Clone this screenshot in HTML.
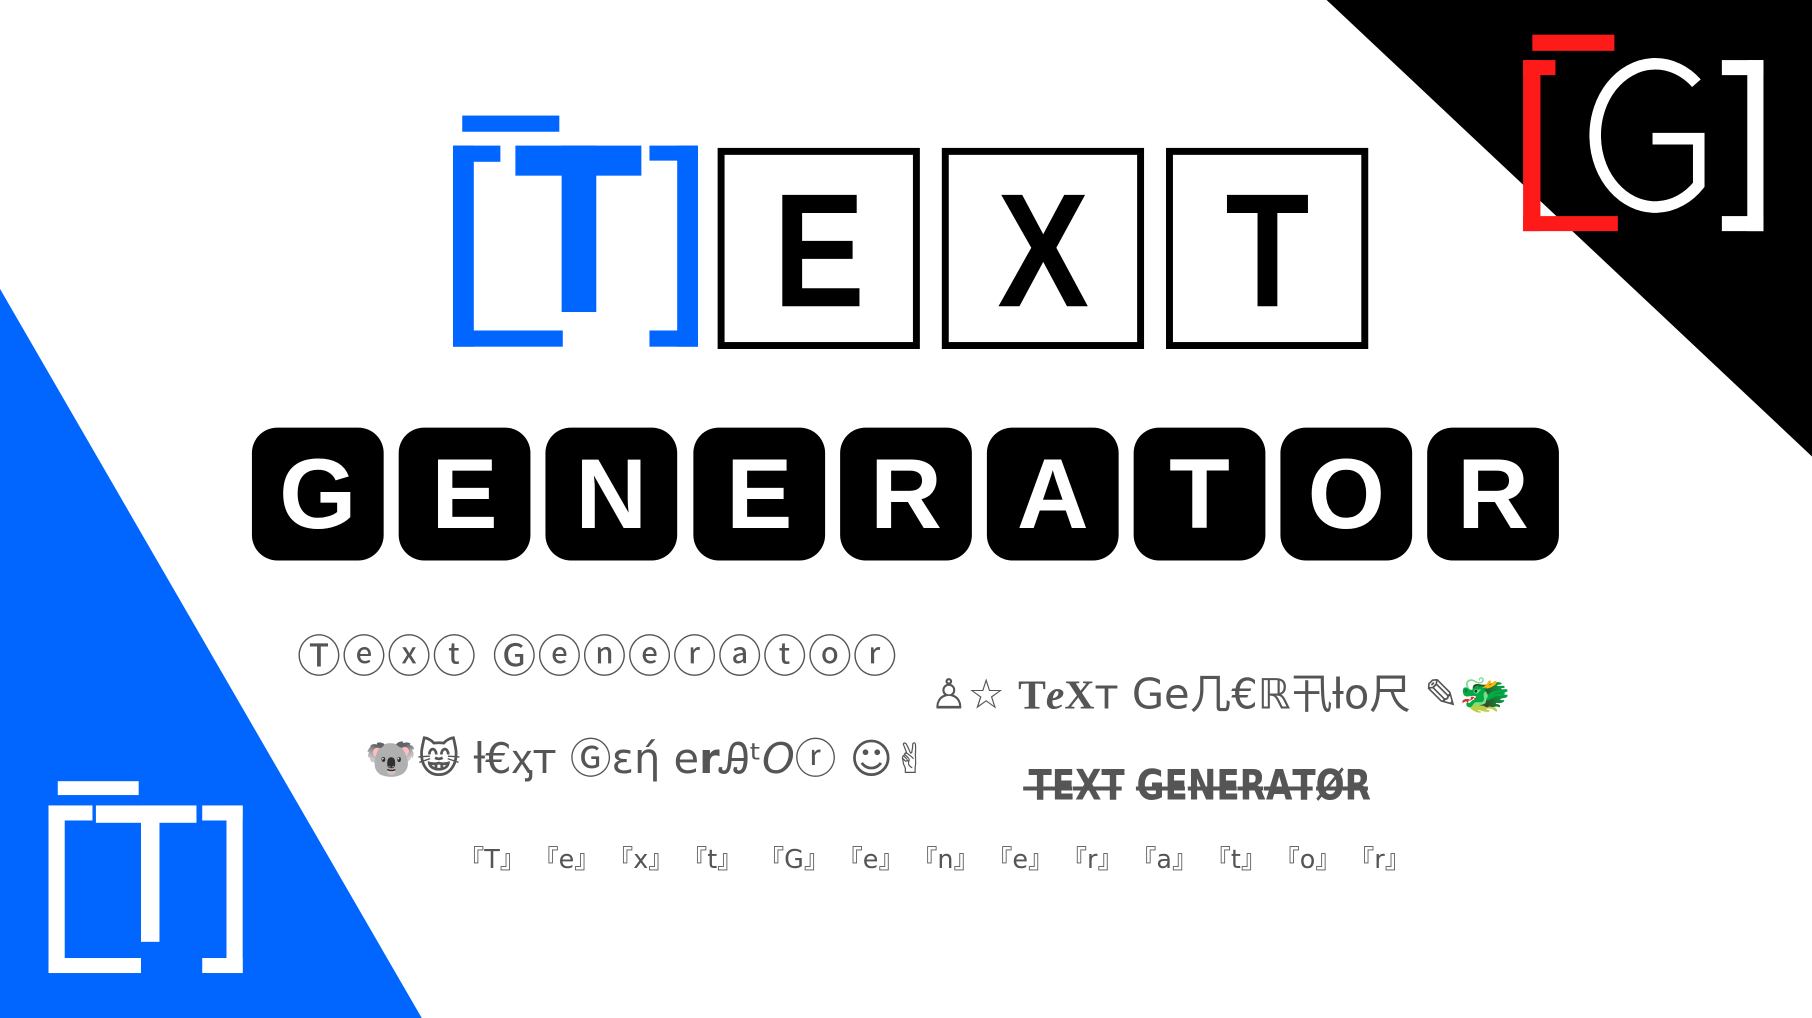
<!DOCTYPE html>
<html><head><meta charset="utf-8"><style>
html,body{margin:0;padding:0;width:1812px;height:1018px;overflow:hidden;background:#fff}
#s{position:absolute;left:0;top:0;width:1568px;height:881px;transform:scale(1.15561);transform-origin:0 0;font-family:"Liberation Sans","DejaVu Sans",sans-serif}
.a{position:absolute}
.box{position:absolute;top:128px;width:163px;height:162px;border:6px solid #000;display:flex;align-items:center;justify-content:center}
.box span{font-family:"Liberation Sans Narrow","Liberation Sans",sans-serif;font-weight:bold;font-size:140px;line-height:1;color:#000;transform:scaleX(.85);margin-top:4px}
.tile{position:absolute;top:370px;width:114px;height:115px;background:#000;border-radius:22px;color:#fff;font-weight:bold;font-size:86px;display:flex;align-items:center;justify-content:center;line-height:1}
.t{position:absolute;color:#555;white-space:nowrap;font-family:"DejaVu Sans","Liberation Sans","Noto Sans CJK JP",sans-serif}
</style></head><body><div id="s">
<svg class="a" style="left:0;top:0" width="1568" height="881">
<polygon points="1148,0 1568,0 1568,395" fill="#000"/>
<polygon points="0,250 365,881 0,881" fill="#0066ff"/>
<g fill="#0066ff">
<rect x="400" y="100" width="84" height="14"/>
<rect x="392" y="126" width="18" height="174"/><rect x="392" y="126" width="41" height="14"/><rect x="392" y="286" width="95" height="14"/>
<rect x="446" y="126" width="109" height="26"/><rect x="486" y="126" width="30" height="144"/>
<rect x="586" y="126" width="18" height="174"/><rect x="562" y="126" width="42" height="13"/><rect x="562" y="286" width="42" height="14"/>
</g>
<g fill="#fff">
<rect x="50" y="676" width="70" height="12"/>
<rect x="42" y="697" width="14" height="145"/><rect x="42" y="697" width="38" height="13"/><rect x="42" y="829" width="80" height="13"/>
<rect x="83" y="697" width="87" height="15"/><rect x="122" y="697" width="16" height="118"/>
<rect x="196" y="697" width="14" height="145"/><rect x="175" y="697" width="35" height="13"/><rect x="175" y="829" width="35" height="13"/>
</g>
<g fill="#ff1a1a">
<rect x="1326" y="30" width="71" height="14"/>
<rect x="1318" y="52" width="15" height="148"/><rect x="1318" y="52" width="28" height="13"/><rect x="1318" y="187" width="82" height="13"/>
</g>
<g fill="#fff">
<rect x="1512" y="52" width="14" height="148"/><rect x="1490" y="52" width="36" height="13"/><rect x="1490" y="187" width="36" height="13"/>
</g>
<path d="M1468,72 A52,62 0 1 0 1470,160 L1470,120 L1430,120" fill="none" stroke="#fff" stroke-width="10"/>
</svg>
<div class="box" style="left:621px"><span>E</span></div>
<div class="box" style="left:815px"><span>X</span></div>
<div class="box" style="left:1009px"><span>T</span></div>
<div class="tile" style="left:218px">G</div>
<div class="tile" style="left:345px">E</div>
<div class="tile" style="left:472px">N</div>
<div class="tile" style="left:600px">E</div>
<div class="tile" style="left:727px">R</div>
<div class="tile" style="left:854px">A</div>
<div class="tile" style="left:981px">T</div>
<div class="tile" style="left:1108px">O</div>
<div class="tile" style="left:1235px">R</div>
<div class="t" style="left:257px;top:537px;font-size:38px;letter-spacing:1px">Ⓣⓔⓧⓣ Ⓖⓔⓝⓔⓡⓐⓣⓞⓡ</div>
<div class="t" style="left:805px;top:572px;font-size:36px">♙☆ <b style="font-family:'Liberation Serif',serif">T<i>e</i>X</b>т Ge几€ℝ卂ƚo尺 ✎🐲</div>
<div class="t" style="left:316px;top:628px;font-size:36px">🐨😸 ƚ€ᶍт Ⓖεή e<b>r</b>Ꭿᵗ<i>O</i>ⓡ ☺✌</div>
<div class="t" style="left:890px;top:660px;font-size:36px;font-weight:bold;transform:scaleX(.82);transform-origin:0 0">T̶E̶X̶T̶ G̶E̶N̶E̶R̶A̶T̶Ø̶R̶</div>
<div class="t" style="left:397px;top:726px;font-size:22px;word-spacing:0px">『T』 『e』 『x』 『t』 &nbsp;『G』 『e』 『n』 『e』 『r』 『a』 『t』 『o』 『r』</div>
</div></body></html>
